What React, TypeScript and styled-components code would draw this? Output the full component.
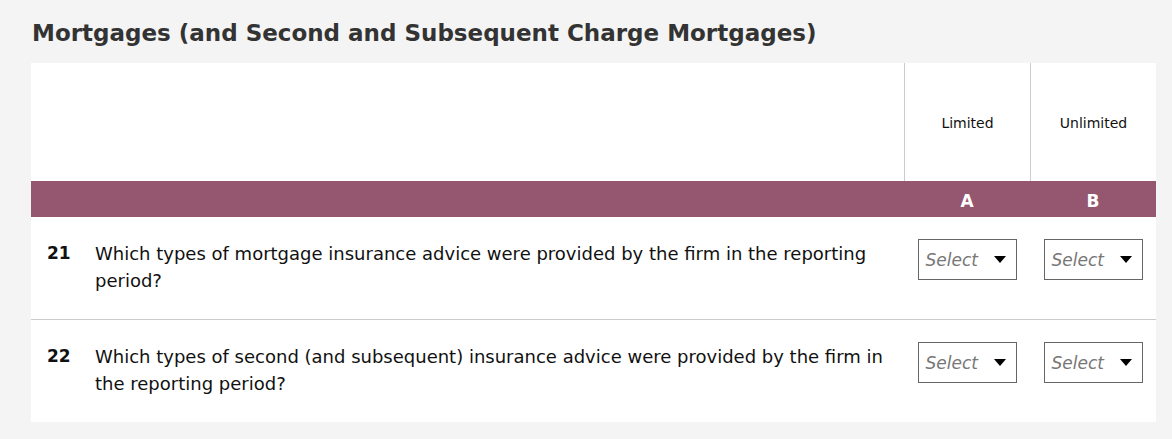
import React from "react";
import styled, { createGlobalStyle } from "styled-components";

const Global = createGlobalStyle`
  html, body { margin: 0; padding: 0; background: #f4f4f4; }
  body { font-family: "DejaVu Sans", Verdana, sans-serif; color: #111; }
`;

const Page = styled.div`
  padding: 19px 16px 17px 31px;
`;

const Title = styled.h1`
  margin: 0 0 15px 1px;
  font-size: 23px;
  line-height: 29px;
  font-weight: bold;
  color: #333;
`;

const Panel = styled.div`
  background: #fff;
  display: grid;
  grid-template-columns: 1fr 126px 126px;
`;

const HeadCell = styled.div<{ $border?: boolean }>`
  height: 118px;
  display: flex;
  align-items: center;
  justify-content: center;
  font-size: 14px;
  padding-top: 2px;
  box-sizing: border-box;
  color: #111;
  border-left: ${(p) => (p.$border ? "1px solid #ccc" : "none")};
`;

const Band = styled.div`
  height: 36px;
  background: #95566f;
  color: #fff;
  font-weight: bold;
  font-size: 17px;
  display: flex;
  align-items: center;
  justify-content: center;
  padding-top: 3px;
  box-sizing: border-box;
`;

const QuestionCell = styled.div<{ $last?: boolean }>`
  display: flex;
  padding: 25px 18px 0 16px;
  height: ${(p) => (p.$last ? "102px" : "103px")};
  box-sizing: border-box;
  border-bottom: ${(p) => (p.$last ? "none" : "1px solid #ccc")};
`;

const Num = styled.div`
  width: 48px;
  flex: none;
  font-weight: bold;
  font-size: 17px;
  line-height: 27px;
  margin-top: -2px;
`;

const Question = styled.div`
  font-size: 18px;
  line-height: 27px;
  margin-top: -2px;
`;

const SelectCell = styled.div<{ $last?: boolean }>`
  display: flex;
  justify-content: center;
  align-items: flex-start;
  padding-top: 22px;
  height: ${(p) => (p.$last ? "102px" : "103px")};
  box-sizing: border-box;
  border-bottom: ${(p) => (p.$last ? "none" : "1px solid #ccc")};
`;

const SelectBox = styled.div`
  width: 99px;
  height: 41px;
  box-sizing: border-box;
  border: 1px solid #666;
  display: flex;
  align-items: center;
  justify-content: space-between;
  padding: 0 10px 0 7px;
  font-style: italic;
  font-size: 17px;
  color: #777;
`;

const Caret = styled.span`
  width: 0;
  height: 0;
  border-left: 6px solid transparent;
  border-right: 6px solid transparent;
  border-top: 7px solid #000;
`;

const rows = [
  {
    n: "21",
    q: "Which types of mortgage insurance advice were provided by the firm in the reporting period?",
  },
  {
    n: "22",
    q: "Which types of second (and subsequent) insurance advice were provided by the firm in the reporting period?",
  },
];

function Select() {
  return (
    <SelectBox>
      <span>Select</span>
      <Caret />
    </SelectBox>
  );
}

export default function App() {
  return (
    <>
      <Global />
      <Page>
        <Title>Mortgages (and Second and Subsequent Charge Mortgages)</Title>
        <Panel>
          <HeadCell />
          <HeadCell $border>Limited</HeadCell>
          <HeadCell $border>Unlimited</HeadCell>
          <Band />
          <Band>A</Band>
          <Band>B</Band>
          {rows.map((r, i) => {
            const last = i === rows.length - 1;
            return (
              <React.Fragment key={r.n}>
                <QuestionCell $last={last}>
                  <Num>{r.n}</Num>
                  <Question>{r.q}</Question>
                </QuestionCell>
                <SelectCell $last={last}>
                  <Select />
                </SelectCell>
                <SelectCell $last={last}>
                  <Select />
                </SelectCell>
              </React.Fragment>
            );
          })}
        </Panel>
      </Page>
    </>
  );
}
